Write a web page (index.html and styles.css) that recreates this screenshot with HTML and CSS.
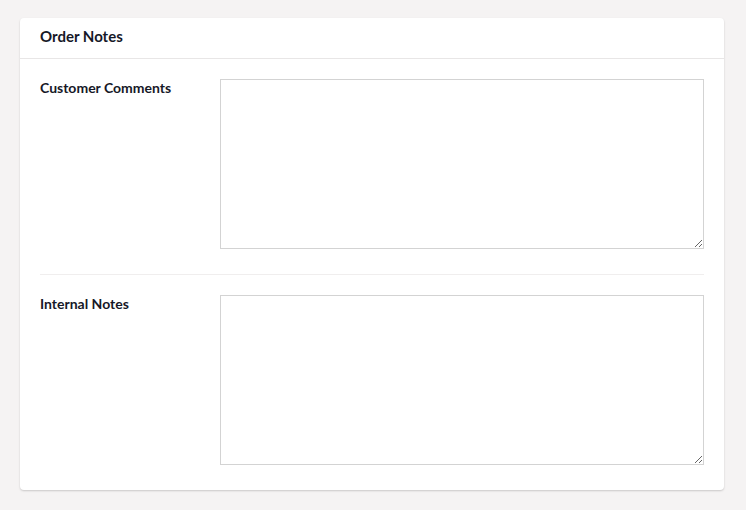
FILE: index.html
```html
<!DOCTYPE html>
<html lang="en">
<head>
<meta charset="utf-8">
<title>Order Notes</title>
<link rel="stylesheet" href="styles.css">
</head>
<body>
<section class="card">
  <header class="card-header">Order Notes</header>
  <div class="card-body">
    <div class="row">
      <label class="label" for="cc">Customer Comments</label>
      <textarea id="cc" class="field"></textarea>
    </div>
    <div class="row">
      <label class="label" for="in">Internal Notes</label>
      <textarea id="in" class="field"></textarea>
    </div>
  </div>
</section>
</body>
</html>
```
FILE: styles.css
```css
html, body {
  margin: 0;
  padding: 0;
}
body {
  background: #f5f3f3;
  font-family: Lato, "Liberation Sans", sans-serif;
  color: #161827;
  padding: 18px 22px 20px 20px;
}
.card {
  background: #fff;
  border-radius: 4px;
  box-shadow: 0 1px 2px rgba(0,0,0,0.18);
}
.card-header {
  height: 41px;
  box-sizing: border-box;
  padding: 9px 20px 0 20px;
  font-size: 15px;
  font-weight: 700;
  line-height: 18px;
  border-bottom: 1px solid #e8e6e6;
}
.card-body {
  padding: 0 20px;
}
.row {
  display: flex;
  padding: 20px 0 25px 0;
  border-bottom: 1px solid #f0eeee;
}
.row:last-child {
  border-bottom: none;
}
.label {
  width: 180px;
  flex: none;
  font-size: 14px;
  font-weight: 700;
  line-height: 18px;
}
.field {
  flex: 1;
  height: 170px;
  box-sizing: border-box;
  margin: 0;
  border: 1px solid #d3d3d3;
  border-radius: 0;
  padding: 6px;
  font-family: inherit;
  font-size: 14px;
  background: #fff;
  outline: none;
}
```
